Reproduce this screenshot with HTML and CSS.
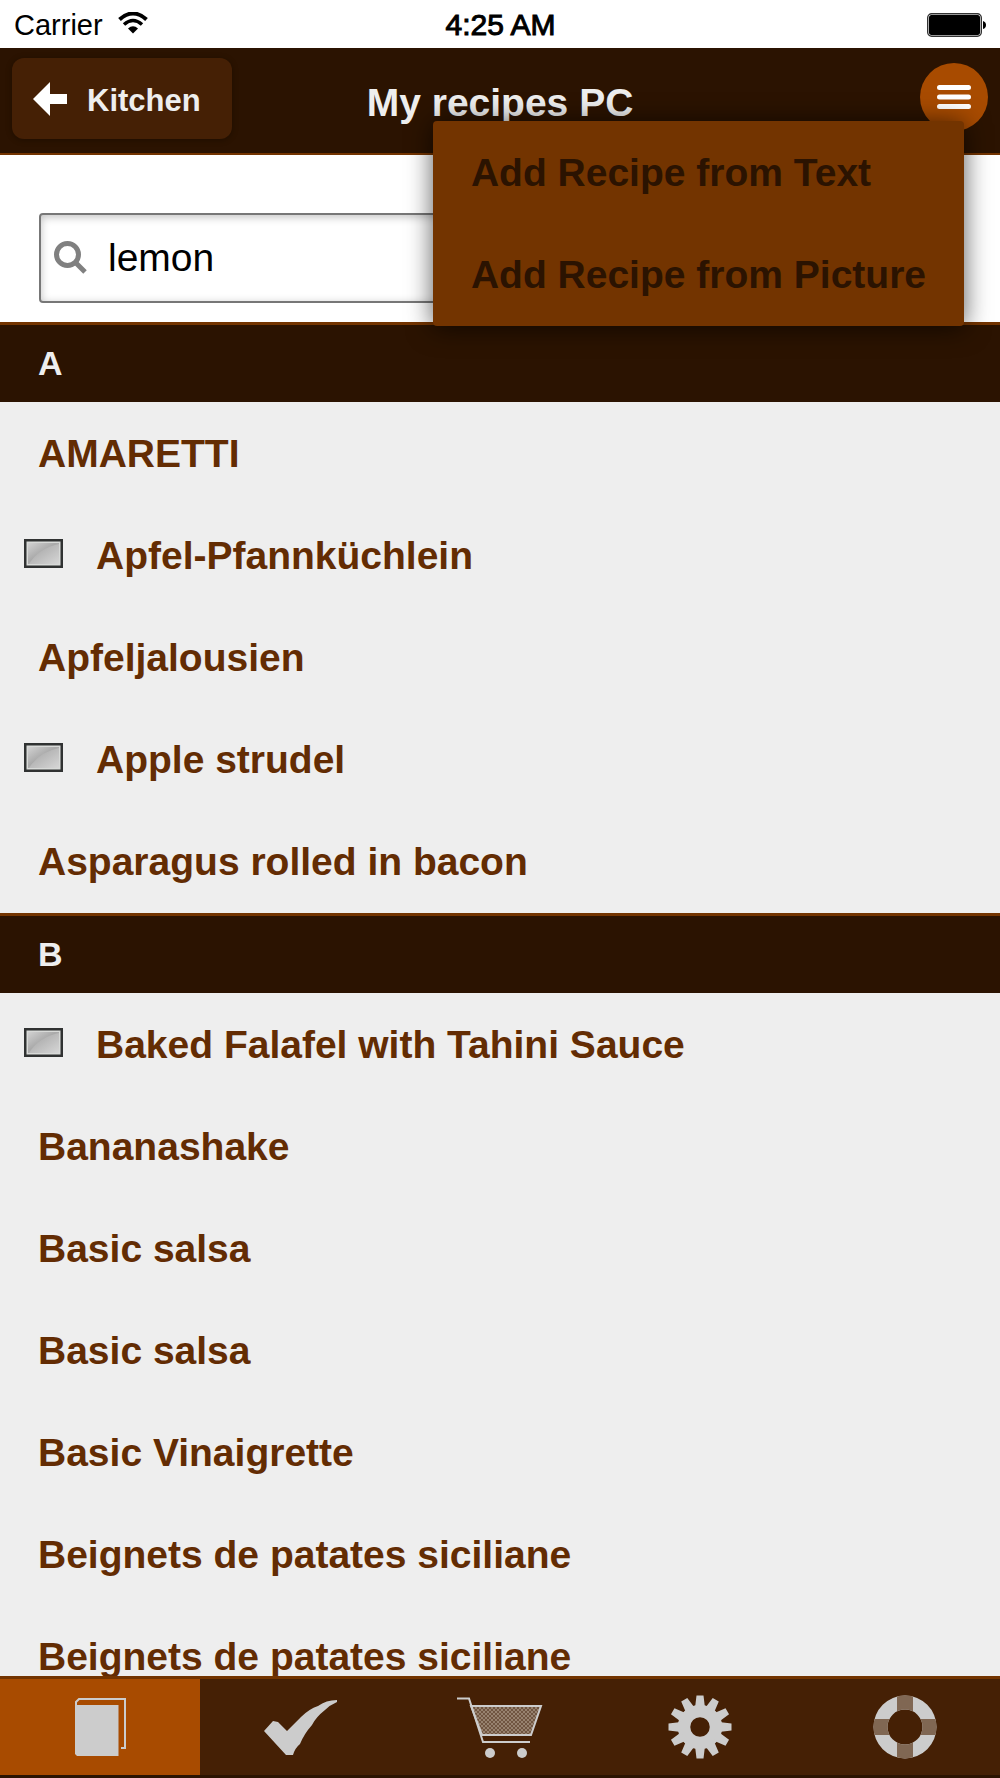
FILE: index.html
```html
<!DOCTYPE html>
<html lang="en">
<head>
  <meta charset="utf-8">
  <meta name="viewport" content="width=device-width, initial-scale=1">
  <title>My recipes PC</title>
  <link rel="stylesheet" href="styles.css">
</head>
<body>
  <div class="status">
    <span class="carrier">Carrier
      <svg class="wifi" viewBox="0 0 30 22" aria-hidden="true">
        <path d="M1.500 7.500Q15-4.500 28.500 7.500" fill="none" stroke="#000" stroke-width="4"/>
        <path d="M6 12.500Q15 4.500 24 12.500" fill="none" stroke="#000" stroke-width="3.500"/>
        <path d="M10 16.500Q15 12 20 16.500L15 21.500Z"/>
      </svg>
    </span>
    <span class="clock">4:25 AM</span>
    <svg class="battery" viewBox="0 0 60 24" aria-hidden="true">
      <rect x=".7" y=".7" width="53.600" height="22.600" rx="4" fill="#fff" stroke="#333" stroke-width="1.400"/>
      <rect x="2" y="2" width="51" height="20" rx="2.500"/>
      <path d="M56 8Q59 9 59 12T56 16Z"/>
    </svg>
  </div>

  <header class="header">
    <button class="back" type="button">
      <svg class="back-icon" viewBox="0 0 34 34" aria-hidden="true"><path d="M0 17L17 0V12H34V22H17V34Z" fill="#fff"/></svg>
      Kitchen
    </button>
    <h1 class="title">My recipes PC</h1>
    <button class="menu-button" type="button" aria-label="Menu">
      <svg class="menu-icon" viewBox="0 0 34 26" aria-hidden="true"><path d="M2.500 3.500H31.500M2.500 13H31.500M2.500 22.500H31.500" stroke="#fff" stroke-width="5" stroke-linecap="round"/></svg>
    </button>
    <nav class="menu" aria-label="Add recipe">
      <a class="menu-item" href="#text">Add Recipe from Text</a>
      <a class="menu-item" href="#picture">Add Recipe from Picture</a>
    </nav>
  </header>

  <form class="search">
    <label class="search-box">
      <svg class="search-icon" viewBox="0 0 34 34" aria-hidden="true"><circle cx="13.500" cy="13.500" r="11" fill="none" stroke="#808080" stroke-width="5"/><path d="M21 21L31 31" stroke="#808080" stroke-width="5"/></svg>
      <input class="search-input" type="text" value="lemon" aria-label="Search recipes">
    </label>
  </form>

  <svg class="symbols" aria-hidden="true">
    <defs>
      <linearGradient id="shine" x1="0" y1="0" x2="1" y2="1"><stop offset="0" stop-color="#d2d2d2"/><stop offset=".45" stop-color="#aaa"/><stop offset="1" stop-color="#b4b4b4"/></linearGradient>
      <linearGradient id="glow" x1="0" y1="0" x2="1" y2="1"><stop offset=".3" stop-color="#b0b0b0"/><stop offset="1" stop-color="#d6d6d6"/></linearGradient>
      <symbol id="photo" viewBox="0 0 39 29">
        <rect width="39" height="29" fill="#303232"/>
        <rect x="2.500" y="2.500" width="34" height="24" fill="#d8dad8"/>
        <rect x="4" y="4" width="31" height="21" fill="url(#shine)"/>
        <path d="M5 25Q15 9 35 5V25Z" fill="url(#glow)"/>
      </symbol>
      <pattern id="mesh" width="4" height="4" patternUnits="userSpaceOnUse"><rect width="4" height="4" fill="#705541"/><path d="M0 0H2V2H0ZM2 2H4V4H2Z" fill="#97826f"/></pattern>
    </defs>
  </svg>

  <main class="list">
    <h2 class="letter">A</h2>
    <ul class="recipes">
      <li><a class="recipe" href="#r1">AMARETTI</a></li>
      <li><a class="recipe with-photo" href="#r2"><svg class="photo"><use href="#photo"/></svg>Apfel-Pfannküchlein</a></li>
      <li><a class="recipe" href="#r3">Apfeljalousien</a></li>
      <li><a class="recipe with-photo" href="#r4"><svg class="photo"><use href="#photo"/></svg>Apple strudel</a></li>
      <li><a class="recipe" href="#r5">Asparagus rolled in bacon</a></li>
    </ul>
    <h2 class="letter">B</h2>
    <ul class="recipes">
      <li><a class="recipe with-photo" href="#r6"><svg class="photo"><use href="#photo"/></svg>Baked Falafel with Tahini Sauce</a></li>
      <li><a class="recipe" href="#r7">Bananashake</a></li>
      <li><a class="recipe" href="#r8">Basic salsa</a></li>
      <li><a class="recipe" href="#r9">Basic salsa</a></li>
      <li><a class="recipe" href="#r10">Basic Vinaigrette</a></li>
      <li><a class="recipe" href="#r11">Beignets de patates siciliane</a></li>
      <li><a class="recipe" href="#r12">Beignets de patates siciliane</a></li>
    </ul>
  </main>

  <nav class="tabs" aria-label="Sections">
    <a class="tab active" href="#recipes" aria-label="Recipes">
      <svg class="tab-icon" viewBox="0 0 90 64"><path d="M20 10H63.500V61H22L20 59Z" fill="#ccc"/><path d="M21 10V7L24 4H70V53H66" fill="none" stroke="#ccc" stroke-width="2"/></svg>
    </a>
    <a class="tab" href="#done" aria-label="Checklist">
      <svg class="tab-icon" viewBox="0 0 90 64"><path d="M9 36L18 26L23 27L32 36L46 22Q54 14 63 11Q71 5 82 5V7Q75 10 70 15Q61 22 57 30Q49 39 45 49Q40 53 38 60H31Z" fill="#ccc"/></svg>
    </a>
    <a class="tab" href="#cart" aria-label="Shopping list">
      <svg class="tab-icon" viewBox="0 0 90 64"><path d="M16 11H86L76 40H27Z" fill="url(#mesh)" stroke="#ccc" stroke-width="2"/><path d="M2 3.500H14L28 47H75" fill="none" stroke="#ccc" stroke-width="2"/><circle cx="35" cy="58" r="5" fill="#ccc"/><circle cx="67" cy="58" r="5" fill="#ccc"/></svg>
    </a>
    <a class="tab" href="#settings" aria-label="Settings">
      <svg class="tab-icon" viewBox="0 0 90 64">
        <circle cx="45" cy="32" r="16" fill="none" stroke="#ccc" stroke-width="12.500"/>
        <g fill="#ccc">
          <path id="tooth" d="M40 13L41.500 .5H48.500L50 13ZM40 51L41.500 63.500H48.500L50 51Z"/>
          <use href="#tooth" transform="rotate(30 45 32)"/><use href="#tooth" transform="rotate(60 45 32)"/><use href="#tooth" transform="rotate(90 45 32)"/><use href="#tooth" transform="rotate(120 45 32)"/><use href="#tooth" transform="rotate(150 45 32)"/>
        </g>
      </svg>
    </a>
    <a class="tab" href="#help" aria-label="Help">
      <svg class="tab-icon" viewBox="0 0 90 64">
        <clipPath id="ring"><path clip-rule="evenodd" d="M18.500 32a31.500 31.500 0 1 0 63 0a31.500 31.500 0 1 0-63 0ZM32.500 32a17.500 17.500 0 1 0 35 0a17.500 17.500 0 1 0-35 0Z"/></clipPath>
        <g clip-path="url(#ring)"><rect width="90" height="64" fill="#ccc"/><path d="M42 0H58V64H42ZM18 24H82V40H18Z" fill="#806753"/></g>
      </svg>
    </a>
  </nav>
</body>
</html>
```
FILE: styles.css
```css
* { box-sizing: border-box; }

body {
  margin: 0;
  height: 100vh;
  display: flex;
  flex-direction: column;
  overflow: hidden;
  background: #eee;
  font-family: "Liberation Sans", Arial, sans-serif;
}

a { color: inherit; text-decoration: none; }
button { font: inherit; border: 0; padding: 0; }
svg { display: block; flex: none; }
.symbols { position: absolute; width: 0; height: 0; }

.status {
  flex: none;
  display: grid;
  grid-template-columns: 1fr auto 1fr;
  align-items: center;
  height: 48px;
  padding: 2px 13px 0 14px;
  background: #fff;
  font-size: 29px;
}
.carrier { display: flex; align-items: center; gap: 15px; }
.wifi { width: 30px; height: 22px; margin-bottom: 4px; }
.clock { font-size: 30px; -webkit-text-stroke: 1px #000; }
.battery { width: 60px; height: 24px; justify-self: end; }

.header {
  flex: none;
  position: relative;
  z-index: 1;
  display: grid;
  grid-template-columns: 1fr auto 1fr;
  align-items: start;
  height: 107px;
  padding: 10px 12px 0;
  background: #2b1301;
  border-bottom: 2px solid #733400;
  color: #eee;
}
.back {
  justify-self: start;
  display: flex;
  align-items: center;
  gap: 20px;
  height: 81px;
  padding: 4px 31px 0 21px;
  border-radius: 12px;
  background: #452005;
  box-shadow: 0 1px 6px rgba(0, 0, 0, .3);
  color: #eee;
  font-size: 31px;
  font-weight: bold;
}
.back-icon { width: 34px; height: 34px; margin-bottom: 4px; }
.title { margin: 0; font-size: 39px; line-height: 90px; }
.menu-button {
  justify-self: end;
  display: grid;
  place-items: center;
  width: 68px;
  height: 68px;
  margin-top: 5px;
  border-radius: 50%;
  background: #a84b00;
}
.menu-icon { width: 34px; height: 26px; }

.menu {
  position: absolute;
  top: 73px;
  right: 36px;
  padding-top: 1px;
  border-radius: 4px;
  background: #733400;
  box-shadow: 0 2px 26px rgba(0, 0, 0, .65);
  color: #2b1301;
  font-size: 39px;
  font-weight: bold;
}
.menu-item { display: block; padding: 0 38px; line-height: 102px; white-space: nowrap; }

.search { flex: none; margin: 0; padding: 58px 39px 19px; background: #fff; }
.search-box {
  display: flex;
  align-items: center;
  gap: 20px;
  height: 90px;
  padding: 0 13px;
  border: 2px solid #777;
  border-radius: 4px;
  box-shadow: inset 0 2px 8px rgba(0, 0, 0, .25);
}
.search-icon { width: 34px; height: 34px; }
.search-input {
  flex: 1;
  min-width: 0;
  padding: 0;
  border: 0;
  outline: 0;
  background: transparent;
  color: #000;
  font: 39px "Liberation Sans", Arial, sans-serif;
}

.list { flex: 1; min-height: 0; overflow: hidden; }
.letter {
  margin: 0;
  padding-left: 38px;
  border-top: 3px solid #733400;
  background: #2b1301;
  color: #eee;
  font-size: 34px;
  line-height: 77px;
}
.recipes { margin: 0; padding: 1px 0 0; list-style: none; }
.recipe {
  display: flex;
  align-items: center;
  height: 102px;
  padding-left: 38px;
  color: #632c03;
  font-size: 39px;
  font-weight: bold;
}
.with-photo { gap: 33px; padding-left: 24px; }
.photo { width: 39px; height: 29px; margin-bottom: 6px; }

.tabs {
  flex: none;
  display: grid;
  grid-template-columns: repeat(5, 1fr);
  height: 102px;
  border-top: 3px solid #733400;
  border-bottom: 3px solid #2b1301;
  background: #452005;
}
.tab { display: grid; place-items: center; }
.active { background: #a84b00; }
.tab-icon { width: 90px; height: 64px; }
```
